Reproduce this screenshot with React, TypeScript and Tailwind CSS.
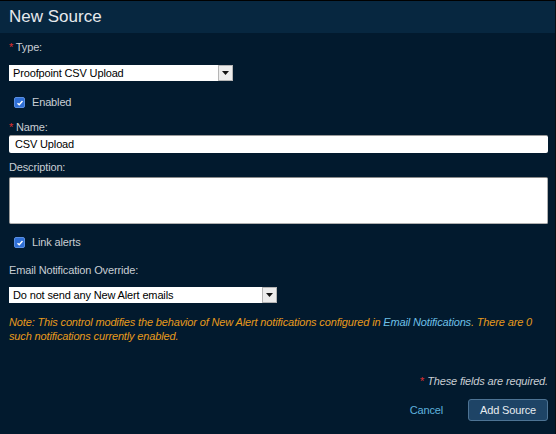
import React from "react";

function Check() {
  return (
    <span className="inline-flex items-center justify-center w-[11px] h-[11px] rounded-[2px] bg-[#2f6fd6] border border-[#5b8fe0]">
      <svg width="8" height="8" viewBox="0 0 8 8">
        <path d="M1.5 4.2 L3.2 5.8 L6.5 2" fill="none" stroke="white" strokeWidth="1.4" />
      </svg>
    </span>
  );
}

function Select({ text, w }: { text: string; w: string }) {
  return (
    <div className={`flex h-[16px] bg-white ${w}`}>
      <div className="flex-1 pl-[4px] text-[11px] leading-[16px] text-black">{text}</div>
      <div className="w-[15px] h-[16px] bg-[#ececec] border border-[#b5b5b5] flex items-center justify-center">
        <svg width="7" height="4" viewBox="0 0 7 4">
          <path d="M0 0 H7 L3.5 4 Z" fill="#111" />
        </svg>
      </div>
    </div>
  );
}

export default function App() {
  return (
    <div
      className="w-[556px] h-[434px] bg-[#021a2e] flex flex-col border-t border-[#000] border-r border-r-[#0a0f14] tracking-[-0.15px]"
      style={{ fontFamily: '"Liberation Sans", Arial, sans-serif' }}
    >
      <div className="h-[32px] bg-[#072740] flex items-center pl-[9px] text-[17px] text-[#e6e9ec] tracking-normal">
        New Source
      </div>
      <div className="flex flex-col pl-[9px] pr-[7px] text-[11px] text-[#c9ced4]">
        <div className="mt-[8px] h-[13px] leading-[13px]">
          <span className="text-[#e03030]">*</span> Type:
        </div>
        <div className="mt-[11px]">
          <Select text="Proofpoint CSV Upload" w="w-[224px]" />
        </div>
        <div className="mt-[15px] flex items-center gap-[7px] pl-[5px] h-[13px]">
          <Check />
          <span>Enabled</span>
        </div>
        <div className="mt-[12px] h-[13px] leading-[13px]">
          <span className="text-[#e03030]">*</span> Name:
        </div>
        <div className="mt-[1px] h-[18px] bg-white rounded-[2px] border-t border-[#9a9a9a] pl-[6px] text-[11px] leading-[17px] text-black">
          CSV Upload
        </div>
        <div className="mt-[8px] h-[13px] leading-[13px]">Description:</div>
        <div className="mt-[3px] h-[47px] bg-white rounded-[2px] border border-[#b0b0b0] border-t-[#8a8a8a] border-l-[#9a9a9a]" />
        <div className="mt-[12px] flex items-center gap-[7px] pl-[5px] h-[13px]">
          <Check />
          <span>Link alerts</span>
        </div>
        <div className="mt-[15px] h-[13px] leading-[13px]">Email Notification Override:</div>
        <div className="mt-[10px]">
          <Select text="Do not send any New Alert emails" w="w-[268px]" />
        </div>
        <div className="mt-[12px] italic text-[#e89a1c] leading-[14px] text-[11px]">
          Note: This control modifies the behavior of New Alert notifications configured in{" "}
          <span className="text-[#6fc0e8]">Email Notifications</span>. There are 0 such notifications currently
          enabled.
        </div>
        <div className="mt-[32px] text-right italic text-[#c9ced4] h-[13px] leading-[13px]">
          <span className="text-[#e03030] not-italic">*</span> These fields are required.
        </div>
        <div className="mt-[11px] flex justify-end items-center">
          <span className="text-[#5fb2de] mr-[25px]">Cancel</span>
          <div className="w-[80px] h-[22px] bg-[#1e4466] border border-[#4d7394] rounded-[3px] flex items-center justify-center text-[#e8ecf0]">
            Add Source
          </div>
        </div>
      </div>
    </div>
  );
}
